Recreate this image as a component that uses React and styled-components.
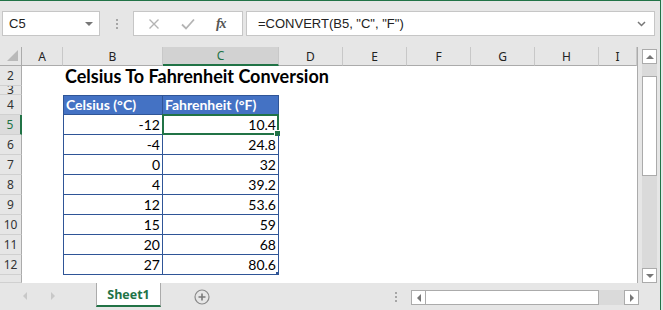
import React from 'react';
import styled, { createGlobalStyle, css } from 'styled-components';

const green = '#217346';
const tableBorder = '#2f5597';
const headerGray = '#e6e6e6';
const lineGray = '#ababab';

const GlobalStyle = createGlobalStyle`
  html, body {
    margin: 0;
    padding: 0;
    background: ${headerGray};
  }
  body {
    width: 663px;
    height: 310px;
    overflow: hidden;
    font-family: "Noto Sans", "Open Sans", sans-serif;
  }
`;

const Frame = styled.div`
  box-sizing: border-box;
  width: 661px;
  height: 310px;
  border-top: 1px solid ${green};
  border-right: 1px solid ${green};
  background: ${headerGray};
  display: flex;
  flex-direction: column;
  overflow: hidden;
`;

/* ---------- formula bar ---------- */

const Toolbar = styled.div`
  display: flex;
  align-items: flex-start;
  height: 46px;
  padding: 10px 0 0 2px;
  box-sizing: border-box;
`;

const Field = styled.div`
  box-sizing: border-box;
  height: 25px;
  background: #fff;
  border: 1px solid #c6c6c6;
  display: flex;
  align-items: center;
`;

const NameBox = styled(Field)`
  width: 98px;
  padding: 0 6px 0 6px;
  justify-content: space-between;
  font-family: "Liberation Sans", sans-serif;
  font-size: 13px;
  color: #222;
`;

const Caret = styled.span`
  width: 0;
  height: 0;
  border-left: 4px solid transparent;
  border-right: 4px solid transparent;
  border-top: 4px solid #777;
`;

const Grip = styled.div`
  width: 33px;
  height: 25px;
  display: flex;
  flex-direction: column;
  align-items: center;
  justify-content: center;
  gap: 2px;

  span {
    width: 2px;
    height: 2px;
    background: #a6a6a6;
  }
`;

const FxBox = styled(Field)`
  width: 110px;
  justify-content: space-around;
  padding: 0 6px 0 4px;
  margin-right: 3px;
`;

const Fx = styled.span`
  font-family: "Liberation Serif", serif;
  font-style: italic;
  font-weight: bold;
  font-size: 14px;
  color: #555;
  letter-spacing: -1px;
`;

const FormulaInput = styled(Field)`
  width: 409px;
  padding: 0 8px 0 11px;
  justify-content: space-between;
  font-family: "Liberation Sans", sans-serif;
  font-size: 13px;
  color: #222;
`;

/* ---------- grid ---------- */

const Middle = styled.div`
  display: flex;
  height: 236px;
`;

const Sheet = styled.div`
  width: 638px;
  box-sizing: border-box;
  border-right: 1px solid ${lineGray};
  display: flex;
  flex-direction: column;
  overflow: hidden;
  background: #fff;
`;

const Row = styled.div`
  display: flex;
  height: ${(p) => p.$h}px;
  flex: none;
`;

const Corner = styled.div`
  width: 22px;
  flex: none;
  box-sizing: border-box;
  border-right: 1px solid ${lineGray};
  border-bottom: 1px solid ${lineGray};
  background: ${headerGray};
  display: flex;
  align-items: flex-end;
  justify-content: flex-end;
  padding: 0 3px 4px 0;

  svg {
    display: block;
  }
`;

const ColHead = styled.div`
  width: ${(p) => p.$w}px;
  flex: ${(p) => (p.$grow ? '1' : 'none')};
  box-sizing: border-box;
  background: ${(p) => (p.$active ? '#d2d2d2' : headerGray)};
  border-right: 1px solid #c8c8c8;
  border-bottom: ${(p) => (p.$active ? `2px solid ${green}` : `1px solid ${lineGray}`)};
  display: flex;
  align-items: center;
  justify-content: center;
  font-size: 12px;
  color: ${(p) => (p.$active ? green : '#222')};
`;

const RowHead = styled.div`
  width: 22px;
  flex: none;
  box-sizing: border-box;
  background: ${(p) => (p.$active ? '#dcdcdc' : headerGray)};
  border-right: ${(p) => (p.$active ? `2px solid ${green}` : `1px solid ${lineGray}`)};
  border-bottom: 1px solid #d0d0d0;
  font-size: 12px;
  line-height: ${(p) => p.$h - 1}px;
  text-align: center;
  overflow: hidden;
  color: ${(p) => (p.$active ? green : '#333')};
`;

const Cell = styled.div`
  width: ${(p) => p.$w}px;
  flex: none;
  box-sizing: border-box;
  font-family: Lato, "Liberation Sans", sans-serif;
  font-size: 14px;
  color: #000;
  display: flex;
  align-items: flex-end;
  padding: 0 2px 1px 2px;
  white-space: nowrap;
  position: relative;
`;

const TitleCell = styled(Cell)`
  font-size: 18px;
  font-weight: bold;
  padding-bottom: 0;
  align-items: center;
  overflow: visible;
`;

const TableCell = styled(Cell)`
  border-right: 1px solid ${tableBorder};
  border-bottom: 1px solid ${tableBorder};
  ${(p) =>
    p.$first &&
    css`
      border-left: 1px solid ${tableBorder};
    `}
  ${(p) =>
    p.$head
      ? css`
          background: #4472c4;
          color: #fff;
          font-weight: bold;
          border-top: 1px solid ${tableBorder};
          justify-content: flex-start;
        `
      : css`
          justify-content: flex-end;
        `}
`;

const Selection = styled.span`
  position: absolute;
  left: -1px;
  top: -1px;
  right: -1px;
  bottom: -1px;
  border: 2px solid ${green};
  pointer-events: none;

  &::after {
    content: '';
    position: absolute;
    right: -4px;
    bottom: -4px;
    width: 5px;
    height: 5px;
    background: ${green};
    border: 1px solid #fff;
  }
`;

const Handle = styled.span`
  position: absolute;
  right: -1px;
  bottom: -1px;
  width: 3px;
  height: 3px;
  background: #2f5597;
`;

/* ---------- vertical scrollbar ---------- */

const VScroll = styled.div`
  width: 22px;
  display: flex;
  flex-direction: column;
  align-items: flex-start;
  padding: 2px 0 0 4px;
  box-sizing: border-box;
  background: ${headerGray};
`;

const VTrack = styled.div`
  width: 15px;
  flex: 1;
  background: #dadada;
  display: flex;
  flex-direction: column;
`;

const ScrollBtn = styled.div`
  box-sizing: border-box;
  width: 15px;
  height: 15px;
  flex: none;
  background: #fff;
  border: 1px solid ${lineGray};
  display: flex;
  align-items: center;
  justify-content: center;
`;

const Arrow = styled.span`
  width: 0;
  height: 0;
  ${(p) =>
    p.$dir === 'up' &&
    css`
      border-left: 4px solid transparent;
      border-right: 4px solid transparent;
      border-bottom: 4px solid #777;
    `}
  ${(p) =>
    p.$dir === 'down' &&
    css`
      border-left: 4px solid transparent;
      border-right: 4px solid transparent;
      border-top: 4px solid #777;
    `}
  ${(p) =>
    p.$dir === 'left' &&
    css`
      border-top: 4px solid transparent;
      border-bottom: 4px solid transparent;
      border-right: 4px solid ${p.$light ? '#c8c8c8' : '#777'};
    `}
  ${(p) =>
    p.$dir === 'right' &&
    css`
      border-top: 4px solid transparent;
      border-bottom: 4px solid transparent;
      border-left: 4px solid ${p.$light ? '#c8c8c8' : '#777'};
    `}
`;

const VThumb = styled.div`
  box-sizing: border-box;
  width: 15px;
  height: 100px;
  margin-top: 12px;
  background: #fff;
  border: 1px solid ${lineGray};
`;

/* ---------- sheet tabs ---------- */

const TabBar = styled.div`
  flex: 1;
  display: flex;
  align-items: flex-start;
  background: ${headerGray};
`;

const NavArrows = styled.div`
  width: 96px;
  height: 26px;
  display: flex;
  align-items: center;
  gap: 24px;
  padding-left: 23px;
  box-sizing: border-box;
`;

const Tab = styled.div`
  box-sizing: border-box;
  width: 65px;
  height: 24px;
  background: #fff;
  border-left: 1px solid ${lineGray};
  border-right: 1px solid ${lineGray};
  border-bottom: 2px solid ${green};
  display: flex;
  align-items: center;
  justify-content: center;
  font-family: "Open Sans", "Noto Sans", sans-serif;
  font-weight: bold;
  font-size: 12.5px;
  color: ${green};
`;

const AddSheet = styled.div`
  margin: 6px 0 0 33px;
  width: 16px;
  height: 16px;
  svg {
    display: block;
  }
`;

const TabGrip = styled.div`
  margin: 9px 0 0 185px;
  display: flex;
  flex-direction: column;
  gap: 2px;
  width: 2px;

  span {
    width: 2px;
    height: 2px;
    background: #a6a6a6;
  }
`;

const HScroll = styled.div`
  margin: 7px 0 0 14px;
  width: 228px;
  height: 15px;
  display: flex;
  background: #dadada;
`;

const HThumb = styled.div`
  box-sizing: border-box;
  width: 173px;
  height: 15px;
  background: #fff;
  border: 1px solid ${lineGray};
  border-left: none;
`;

const HGap = styled.div`
  flex: 1;
`;

const columns = [
  { key: 'A', w: 41 },
  { key: 'B', w: 100 },
  { key: 'C', w: 116 },
  { key: 'D', w: 64 },
  { key: 'E', w: 64 },
  { key: 'F', w: 64 },
  { key: 'G', w: 64 },
  { key: 'H', w: 64 },
  { key: 'I', w: 39, grow: true },
];

const data = [
  [-12, 10.4],
  [-4, 24.8],
  [0, 32],
  [4, 39.2],
  [12, 53.6],
  [15, 59],
  [20, 68],
  [27, 80.6],
];

function RowHeader({ n, h, active }) {
  return (
    <RowHead $h={h} $active={active}>
      {n}
    </RowHead>
  );
}

export default function App() {
  return (
    <>
      <GlobalStyle />
      <Frame>
        <Toolbar>
          <NameBox>
            <span>C5</span>
            <Caret />
          </NameBox>
          <Grip>
            <span />
            <span />
            <span />
          </Grip>
          <FxBox>
            <svg width="12" height="12" viewBox="0 0 12 12">
              <path d="M1.5 1.5 L10.5 10.5 M10.5 1.5 L1.5 10.5" stroke="#b4b4b4" strokeWidth="1.4" fill="none" />
            </svg>
            <svg width="14" height="12" viewBox="0 0 14 12">
              <path d="M1 6.5 L5 10.5 L13 1.5" stroke="#b4b4b4" strokeWidth="1.8" fill="none" />
            </svg>
            <Fx>fx</Fx>
          </FxBox>
          <FormulaInput>
            <span>=CONVERT(B5, "C", "F")</span>
            <svg width="9" height="6" viewBox="0 0 9 6">
              <path d="M1 1 L4.5 4.5 L8 1" stroke="#777" strokeWidth="1.5" fill="none" />
            </svg>
          </FormulaInput>
        </Toolbar>

        <Middle>
          <Sheet>
            <Row $h={19}>
              <Corner>
                <svg width="11" height="11" viewBox="0 0 11 11">
                  <polygon points="11,0 11,11 0,11" fill="#b9b9b9" />
                </svg>
              </Corner>
              {columns.map((c) => (
                <ColHead key={c.key} $w={c.w} $grow={c.grow} $active={c.key === 'C'}>
                  {c.key}
                </ColHead>
              ))}
            </Row>

            <Row $h={20}>
              <RowHeader n={2} h={20} />
              <Cell $w={41} />
              <TitleCell $w={100}>Celsius To Fahrenheit Conversion</TitleCell>
            </Row>

            <Row $h={9}>
              <RowHeader n={3} h={9} />
            </Row>

            <Row $h={20}>
              <RowHeader n={4} h={20} />
              <Cell $w={41} />
              <TableCell $w={100} $first $head>
                Celsius (°C)
              </TableCell>
              <TableCell $w={116} $head>
                Fahrenheit (°F)
              </TableCell>
            </Row>

            {data.map(([c, f], i) => {
              const n = i + 5;
              const last = i === data.length - 1;
              return (
                <Row $h={20} key={n}>
                  <RowHeader n={n} h={20} active={n === 5} />
                  <Cell $w={41} />
                  <TableCell $w={100} $first>
                    {c}
                  </TableCell>
                  <TableCell $w={116}>
                    {f}
                    {n === 5 && <Selection />}
                    {last && <Handle />}
                  </TableCell>
                </Row>
              );
            })}

            <Row $h={8}>
              <RowHeader h={20} />
            </Row>
          </Sheet>

          <VScroll>
            <ScrollBtn>
              <Arrow $dir="up" />
            </ScrollBtn>
            <VTrack>
              <VThumb />
            </VTrack>
            <ScrollBtn>
              <Arrow $dir="down" />
            </ScrollBtn>
          </VScroll>
        </Middle>

        <TabBar>
          <NavArrows>
            <Arrow $dir="left" $light />
            <Arrow $dir="right" $light />
          </NavArrows>
          <Tab>Sheet1</Tab>
          <AddSheet>
            <svg width="16" height="16" viewBox="0 0 16 16">
              <circle cx="8" cy="8" r="7" stroke="#8a8a8a" strokeWidth="1.2" fill="none" />
              <path d="M8 4.5 V11.5 M4.5 8 H11.5" stroke="#7a7a7a" strokeWidth="1.6" />
            </svg>
          </AddSheet>
          <TabGrip>
            <span />
            <span />
            <span />
          </TabGrip>
          <HScroll>
            <ScrollBtn>
              <Arrow $dir="left" />
            </ScrollBtn>
            <HThumb />
            <HGap />
            <ScrollBtn>
              <Arrow $dir="right" />
            </ScrollBtn>
          </HScroll>
        </TabBar>
      </Frame>
    </>
  );
}
